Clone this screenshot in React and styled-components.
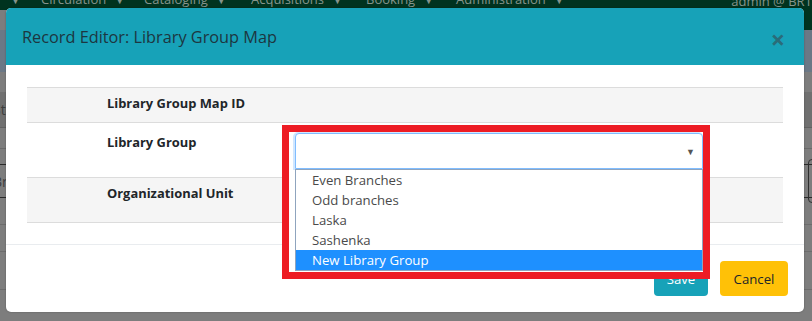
import React from 'react'
import styled, { createGlobalStyle } from 'styled-components'

const GlobalStyle = createGlobalStyle`
  html, body {
    margin: 0;
    padding: 0;
    background: #7d7d7d;
    overflow: hidden;
  }
  body {
    font-family: 'Open Sans', 'Noto Sans', sans-serif;
    font-size: 13px;
    color: #212529;
  }
  * {
    box-sizing: border-box;
  }
`

const Page = styled.div`
  position: relative;
  width: 812px;
  height: 321px;
  overflow: hidden;
  background: #7d7d7d;
`

/* the page behind the backdrop, already dimmed */
const Navbar = styled.div`
  height: 10px;
  background: #00331f;
  overflow: hidden;
  display: flex;
  align-items: flex-end;
  padding: 0 0 3px 11px;
`

const NavItem = styled.span`
  display: flex;
  align-items: baseline;
  gap: 9px;
  width: ${p => (p.$w ? `${p.$w}px` : 'auto')};
  flex-shrink: 0;
  line-height: 12px;
  color: #86938c;
  font-size: 13px;
  margin-left: ${p => (p.$push ? 'auto' : '0')};
  white-space: nowrap;
`

const Caret = styled.span`
  font-size: 9px;
`

const Band = styled.div`
  height: ${p => p.$h}px;
  background: ${p => p.$bg || '#7d7d7d'};
  border-bottom: ${p => (p.$line ? `1px solid ${p.$line}` : 'none')};
  display: flex;
  justify-content: space-between;
  align-items: center;
  color: #3e3e3e;
  font-size: 14px;
`

const StripText = styled.span`
  margin-left: -7px;
`

const RightCorner = styled.div`
  width: 14px;
  height: 100%;
  background: ${p => p.$bg};
`

const RightBox = styled.div`
  width: 12px;
  height: 44px;
  margin-right: -8px;
  border: 1px solid #2e2e2e;
  border-radius: 4px;
`

const Backdrop = styled.div`
  position: absolute;
  inset: 0;
`

const Modal = styled.div`
  position: absolute;
  left: 6px;
  top: 8px;
  width: 798px;
  height: 304px;
  background: #fff;
  border-radius: 5px;
  box-shadow: 0 0 2px rgba(0, 0, 0, 0.3);
  display: flex;
  flex-direction: column;
`

const Header = styled.div`
  height: 57px;
  background: #17a2b8;
  border-radius: 5px 5px 0 0;
  display: flex;
  align-items: center;
  justify-content: space-between;
  padding: 0 19px 0 16px;
`

const Title = styled.h5`
  margin: 0;
  font-size: 16.3px;
  font-weight: 400;
  color: #1d3640;
`

const Close = styled.span`
  font-size: 25px;
  font-weight: 700;
  line-height: 1;
  color: #2a6c79;
  margin-top: 5px;
`

const Body = styled.div`
  padding: 22px 21px;
  height: 179px;
`

const Row = styled.div`
  display: grid;
  grid-template-columns: 80px 188px 408px 1fr;
  height: ${p => p.$h}px;
  background: ${p => (p.$shade ? '#f5f5f5' : '#fff')};
  border-top: 1px solid #dcdcdc;
  border-bottom: ${p => (p.$last ? '1px solid #dcdcdc' : 'none')};
`

const Label = styled.label`
  grid-column: 2;
  font-weight: 700;
  font-size: 12.9px;
  color: #212529;
  padding-top: ${p => p.$pad}px;
`

const SelectWrap = styled.div`
  grid-column: 3;
  position: relative;
  z-index: 6;
  margin-top: 10px;
  height: 36px;
`

const SelectBox = styled.div`
  height: 36px;
  border: 1px solid #80bdff;
  border-radius: 4px 4px 0 0;
  box-shadow: -1px 0 0 1px rgba(0, 123, 255, 0.18);
  background: #fff;
  display: flex;
  align-items: center;
  justify-content: flex-end;
  padding-right: 7px;
  color: #555;
  font-size: 9px;
`

const List = styled.ul`
  position: absolute;
  top: 36px;
  left: 0;
  right: 0;
  margin: 0;
  padding: 0;
  list-style: none;
  background: #fff;
  border: 1px solid #8fa4be;
`

const Option = styled.li`
  height: 20px;
  line-height: 20px;
  padding-left: 16px;
  font-size: 13.2px;
  color: ${p => (p.$active ? '#fff' : '#4a4a4a')};
  background: ${p => (p.$active ? '#1e90ff' : '#fff')};
`

const Annotation = styled.div`
  position: absolute;
  left: 276px;
  top: 117px;
  width: 428px;
  height: 154px;
  border: 7px solid #ed1c24;
  background: #fff;
  z-index: 5;
`

const Footer = styled.div`
  flex: 1;
  border-top: 1px solid #e9ecef;
  display: flex;
  justify-content: flex-end;
  align-items: flex-start;
  gap: 12px;
  padding: 16px 16px 0 0;
`

const Button = styled.button`
  width: ${p => p.$w}px;
  height: 35px;
  padding: 0;
  border: none;
  border-radius: 4px;
  font-family: inherit;
  font-size: 13.2px;
  background: ${p => p.$bg};
  color: ${p => p.$fg};
`

const navItems = [
  ['Circulation', 103],
  ['Cataloging', 107],
  ['Acquisitions', 115],
  ['Booking', 90],
  ['Administration', 160],
]
const groups = ['Even Branches', 'Odd branches', 'Laska', 'Sashenka', 'New Library Group']

export default function App() {
  return (
    <Page>
      <GlobalStyle />
      <Backdrop>
        <Navbar>
          <NavItem $w={30}><Caret>▼</Caret></NavItem>
          {navItems.map(([n, w]) => (
            <NavItem key={n} $w={w}>
              {n}<Caret>▼</Caret>
            </NavItem>
          ))}
          <NavItem $push>admin @ BR1</NavItem>
        </Navbar>
        <Band $h={20}><span /><RightCorner $bg="#00331f" /></Band>
        <Band $h={42} $bg="#6b7886"><span /></Band>
        <Band $h={20}><span /></Band>
        <Band $h={36} $bg="#707070" $line="#616161"><StripText>Stat</StripText></Band>
        <Band $h={21} $line="#6a6a6a"><span /></Band>
        <Band $h={16} $line="#2a2a2a"><span /></Band>
        <Band $h={33} $line="#2a2a2a"><StripText>Bra</StripText><RightBox /></Band>
        <Band $h={27} $line="#6c6c6c"><span /></Band>
        <Band $h={27} $line="#6c6c6c"><span /></Band>
        <Band $h={38} $line="#6c6c6c"><span /></Band>
      </Backdrop>

      <Modal>
        <Header>
          <Title>Record Editor: Library Group Map</Title>
          <Close>×</Close>
        </Header>
        <Body>
          <Row $h={35} $shade>
            <Label $pad={6}>Library Group Map ID</Label>
          </Row>
          <Row $h={55}>
            <Label $pad={10}>Library Group</Label>
            <SelectWrap>
              <SelectBox>▼</SelectBox>
              <List>
                {groups.map((g, i) => (
                  <Option key={g} $active={i === groups.length - 1}>{g}</Option>
                ))}
              </List>
            </SelectWrap>
          </Row>
          <Row $h={46} $shade $last>
            <Label $pad={6}>Organizational Unit</Label>
          </Row>
        </Body>
        <Footer>
          <Button $w={54} $bg="#17a2b8" $fg="#fff">Save</Button>
          <Button $w={68} $bg="#ffc107" $fg="#212529">Cancel</Button>
        </Footer>
        <Annotation />
      </Modal>
    </Page>
  )
}
